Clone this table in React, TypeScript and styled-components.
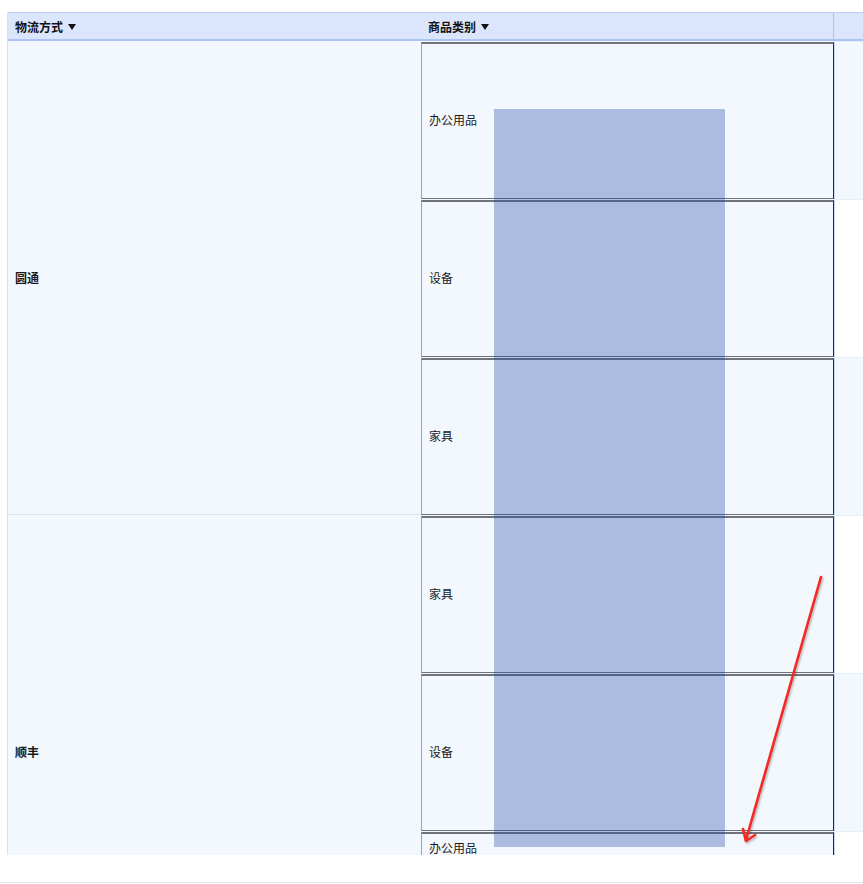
import React from "react";
import styled, { createGlobalStyle } from "styled-components";

const Global = createGlobalStyle`
  html, body { margin: 0; padding: 0; background: #ffffff; }
  body { font-family: "Noto Sans CJK SC", "Noto Sans", sans-serif; color: #1a1a1a; }
`;

const Page = styled.div`
  position: relative;
  width: 863px;
  height: 884px;
  overflow: hidden;
  padding: 12px 0 0 7px;
  box-sizing: border-box;
`;

const Table = styled.div`
  width: 1030px;
  border-left: 1px solid #d6e0f5;
  box-sizing: border-box;
`;

const Header = styled.div`
  display: grid;
  grid-template-columns: 413px 413px 200px;
  height: 29px;
  box-sizing: border-box;
  background: #dbe6fd;
  border-top: 1px solid #b9cdf5;
  border-bottom: 2px solid #acc4f3;
`;

const HeadCell = styled.div<{ $divider?: boolean }>`
  display: flex;
  align-items: center;
  gap: 5px;
  padding-left: 7px;
  font-size: 12px;
  font-weight: 700;
  color: #111;
  border-right: ${(p) => (p.$divider ? "1px solid #acc4f3" : "none")};
`;

const Caret = styled.span`
  width: 0;
  height: 0;
  border-left: 4.5px solid transparent;
  border-right: 4.5px solid transparent;
  border-top: 6px solid #111;
  margin-top: 1px;
`;

const Body = styled.div`
  height: 814px;
  overflow: hidden;
`;

const Group = styled.div`
  display: grid;
  grid-template-columns: 413px 413px 200px;
  grid-auto-rows: 158px;
  background: #f3f7fe;
`;

const GroupCell = styled.div<{ $rows: number }>`
  grid-row: span ${(p) => p.$rows};
  display: flex;
  align-items: center;
  padding-left: 7px;
  font-size: 12px;
  font-weight: 700;
  background: #f3f7fe;
  border-bottom: 1px solid #dbe3f1;
  box-sizing: border-box;
`;

const CatCell = styled.div<{ $top?: boolean }>`
  display: flex;
  align-items: ${(p) => (p.$top ? "flex-start" : "center")};
  padding: ${(p) => (p.$top ? "5px 0 0 7px" : "0 0 3px 7px")};
  margin-top: 1px;
  font-size: 12px;
  background: #f3f7fe;
  box-sizing: border-box;
  border-top: 2px solid #70737c;
  border-bottom: 1px solid #6e717a;
  border-left: 1px solid #9ea3ae;
  border-right: 1px solid #1f2a4a;
`;

const ValueCell = styled.div<{ $alt?: boolean }>`
  background: ${(p) => (p.$alt ? "#ffffff" : "#f3f7fe")};
  border-left: 1px solid #c9d8f7;
  border-top: 1px solid #e7eefc;
  box-sizing: border-box;
`;

const Footer = styled.div`
  height: 27px;
  border-bottom: 1px solid #e4e7ec;
  margin-left: -7px;
  width: 870px;
`;

const Highlight = styled.div`
  position: absolute;
  left: 494px;
  top: 109px;
  width: 231px;
  height: 738px;
  background: rgba(35, 74, 166, 0.34);
  pointer-events: none;
`;

const ArrowLayer = styled.svg`
  position: absolute;
  left: 0;
  top: 0;
  pointer-events: none;
`;

const groups = [
  { name: "圆通", items: ["办公用品", "设备", "家具"] },
  { name: "顺丰", items: ["家具", "设备", "办公用品"] },
];

export default function App() {
  let rowIndex = 0;
  return (
    <>
      <Global />
      <Page>
        <Table>
          <Header>
            <HeadCell>
              物流方式 <Caret />
            </HeadCell>
            <HeadCell $divider>
              商品类别 <Caret />
            </HeadCell>
            <HeadCell />
          </Header>
          <Body>
            {groups.map((g) => (
              <Group key={g.name}>
                <GroupCell $rows={g.items.length}>{g.name}</GroupCell>
                {g.items.map((it, i) => {
                  const idx = rowIndex++;
                  return (
                    <React.Fragment key={it + i}>
                      <CatCell $top={idx === 5}>{it}</CatCell>
                      <ValueCell $alt={idx % 2 === 1} />
                    </React.Fragment>
                  );
                })}
              </Group>
            ))}
          </Body>
        </Table>
        <Footer />
        <Highlight />
        <ArrowLayer width="863" height="884" viewBox="0 0 863 884">
          <defs>
            <filter id="sh" x="-50%" y="-50%" width="200%" height="200%">
              <feDropShadow dx="1" dy="1.5" stdDeviation="1" floodColor="#000" floodOpacity="0.3" />
            </filter>
          </defs>
          <g filter="url(#sh)" stroke="#f22a24" strokeWidth="2.6" strokeLinecap="round" strokeLinejoin="round" fill="none">
            <line x1="821" y1="577" x2="746" y2="840" />
            <polyline points="743,829 746,841 755,835" />
          </g>
        </ArrowLayer>
      </Page>
    </>
  );
}
